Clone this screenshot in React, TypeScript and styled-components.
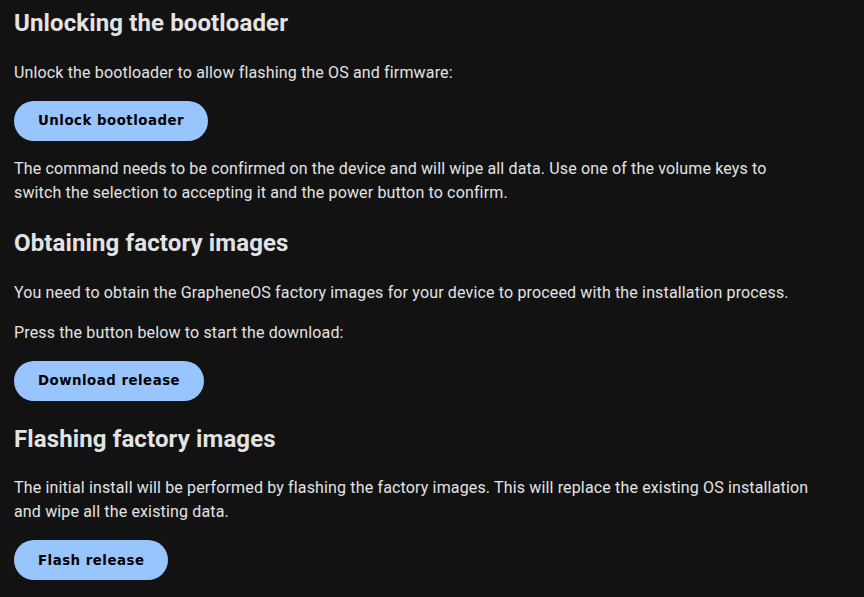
import React from "react";
import styled, { createGlobalStyle } from "styled-components";

const GlobalStyle = createGlobalStyle`
  html, body {
    margin: 0;
    padding: 0;
    background: #121212;
  }
  body {
    font-family: Roboto, "Noto Sans", sans-serif;
    color: #e3e3e3;
  }
`;

const Page = styled.main`
  display: flex;
  flex-direction: column;
  align-items: flex-start;
  padding: 9px 14px 16px;
  max-width: 800px;
  background: #121212;
`;

const Heading = styled.h2`
  margin: 8px 0 23px;
  font-size: 24px;
  line-height: 1.2;
  font-weight: 700;
  letter-spacing: 0.12px;
  color: #e3e3e3;
  &:first-child {
    margin-top: 0;
  }
`;

const Paragraph = styled.p`
  margin: 0 0 16px;
  font-size: 16px;
  line-height: 24px;
  letter-spacing: 0.15px;
`;

const ActionButton = styled.button`
  margin: 0 0 16px;
  height: 40px;
  padding: 0 24px;
  border: none;
  border-radius: 20px;
  background: #99c5ff;
  color: #000;
  font-family: "DejaVu Sans", Verdana, sans-serif;
  font-weight: 700;
  font-size: 13.333px;
  letter-spacing: 0.5px;
  cursor: pointer;
`;

export default function App() {
  return (
    <>
      <GlobalStyle />
      <Page>
        <Heading>Unlocking the bootloader</Heading>
        <Paragraph>Unlock the bootloader to allow flashing the OS and firmware:</Paragraph>
        <ActionButton>Unlock bootloader</ActionButton>
        <Paragraph>
          The command needs to be confirmed on the device and will wipe all data. Use one of the
          volume keys to switch the selection to accepting it and the power button to confirm.
        </Paragraph>

        <Heading>Obtaining factory images</Heading>
        <Paragraph>
          You need to obtain the GrapheneOS factory images for your device to proceed with the
          installation process.
        </Paragraph>
        <Paragraph>Press the button below to start the download:</Paragraph>
        <ActionButton>Download release</ActionButton>

        <Heading>Flashing factory images</Heading>
        <Paragraph>
          The initial install will be performed by flashing the factory images. This will replace
          the existing OS installation and wipe all the existing data.
        </Paragraph>
        <ActionButton>Flash release</ActionButton>
      </Page>
    </>
  );
}
